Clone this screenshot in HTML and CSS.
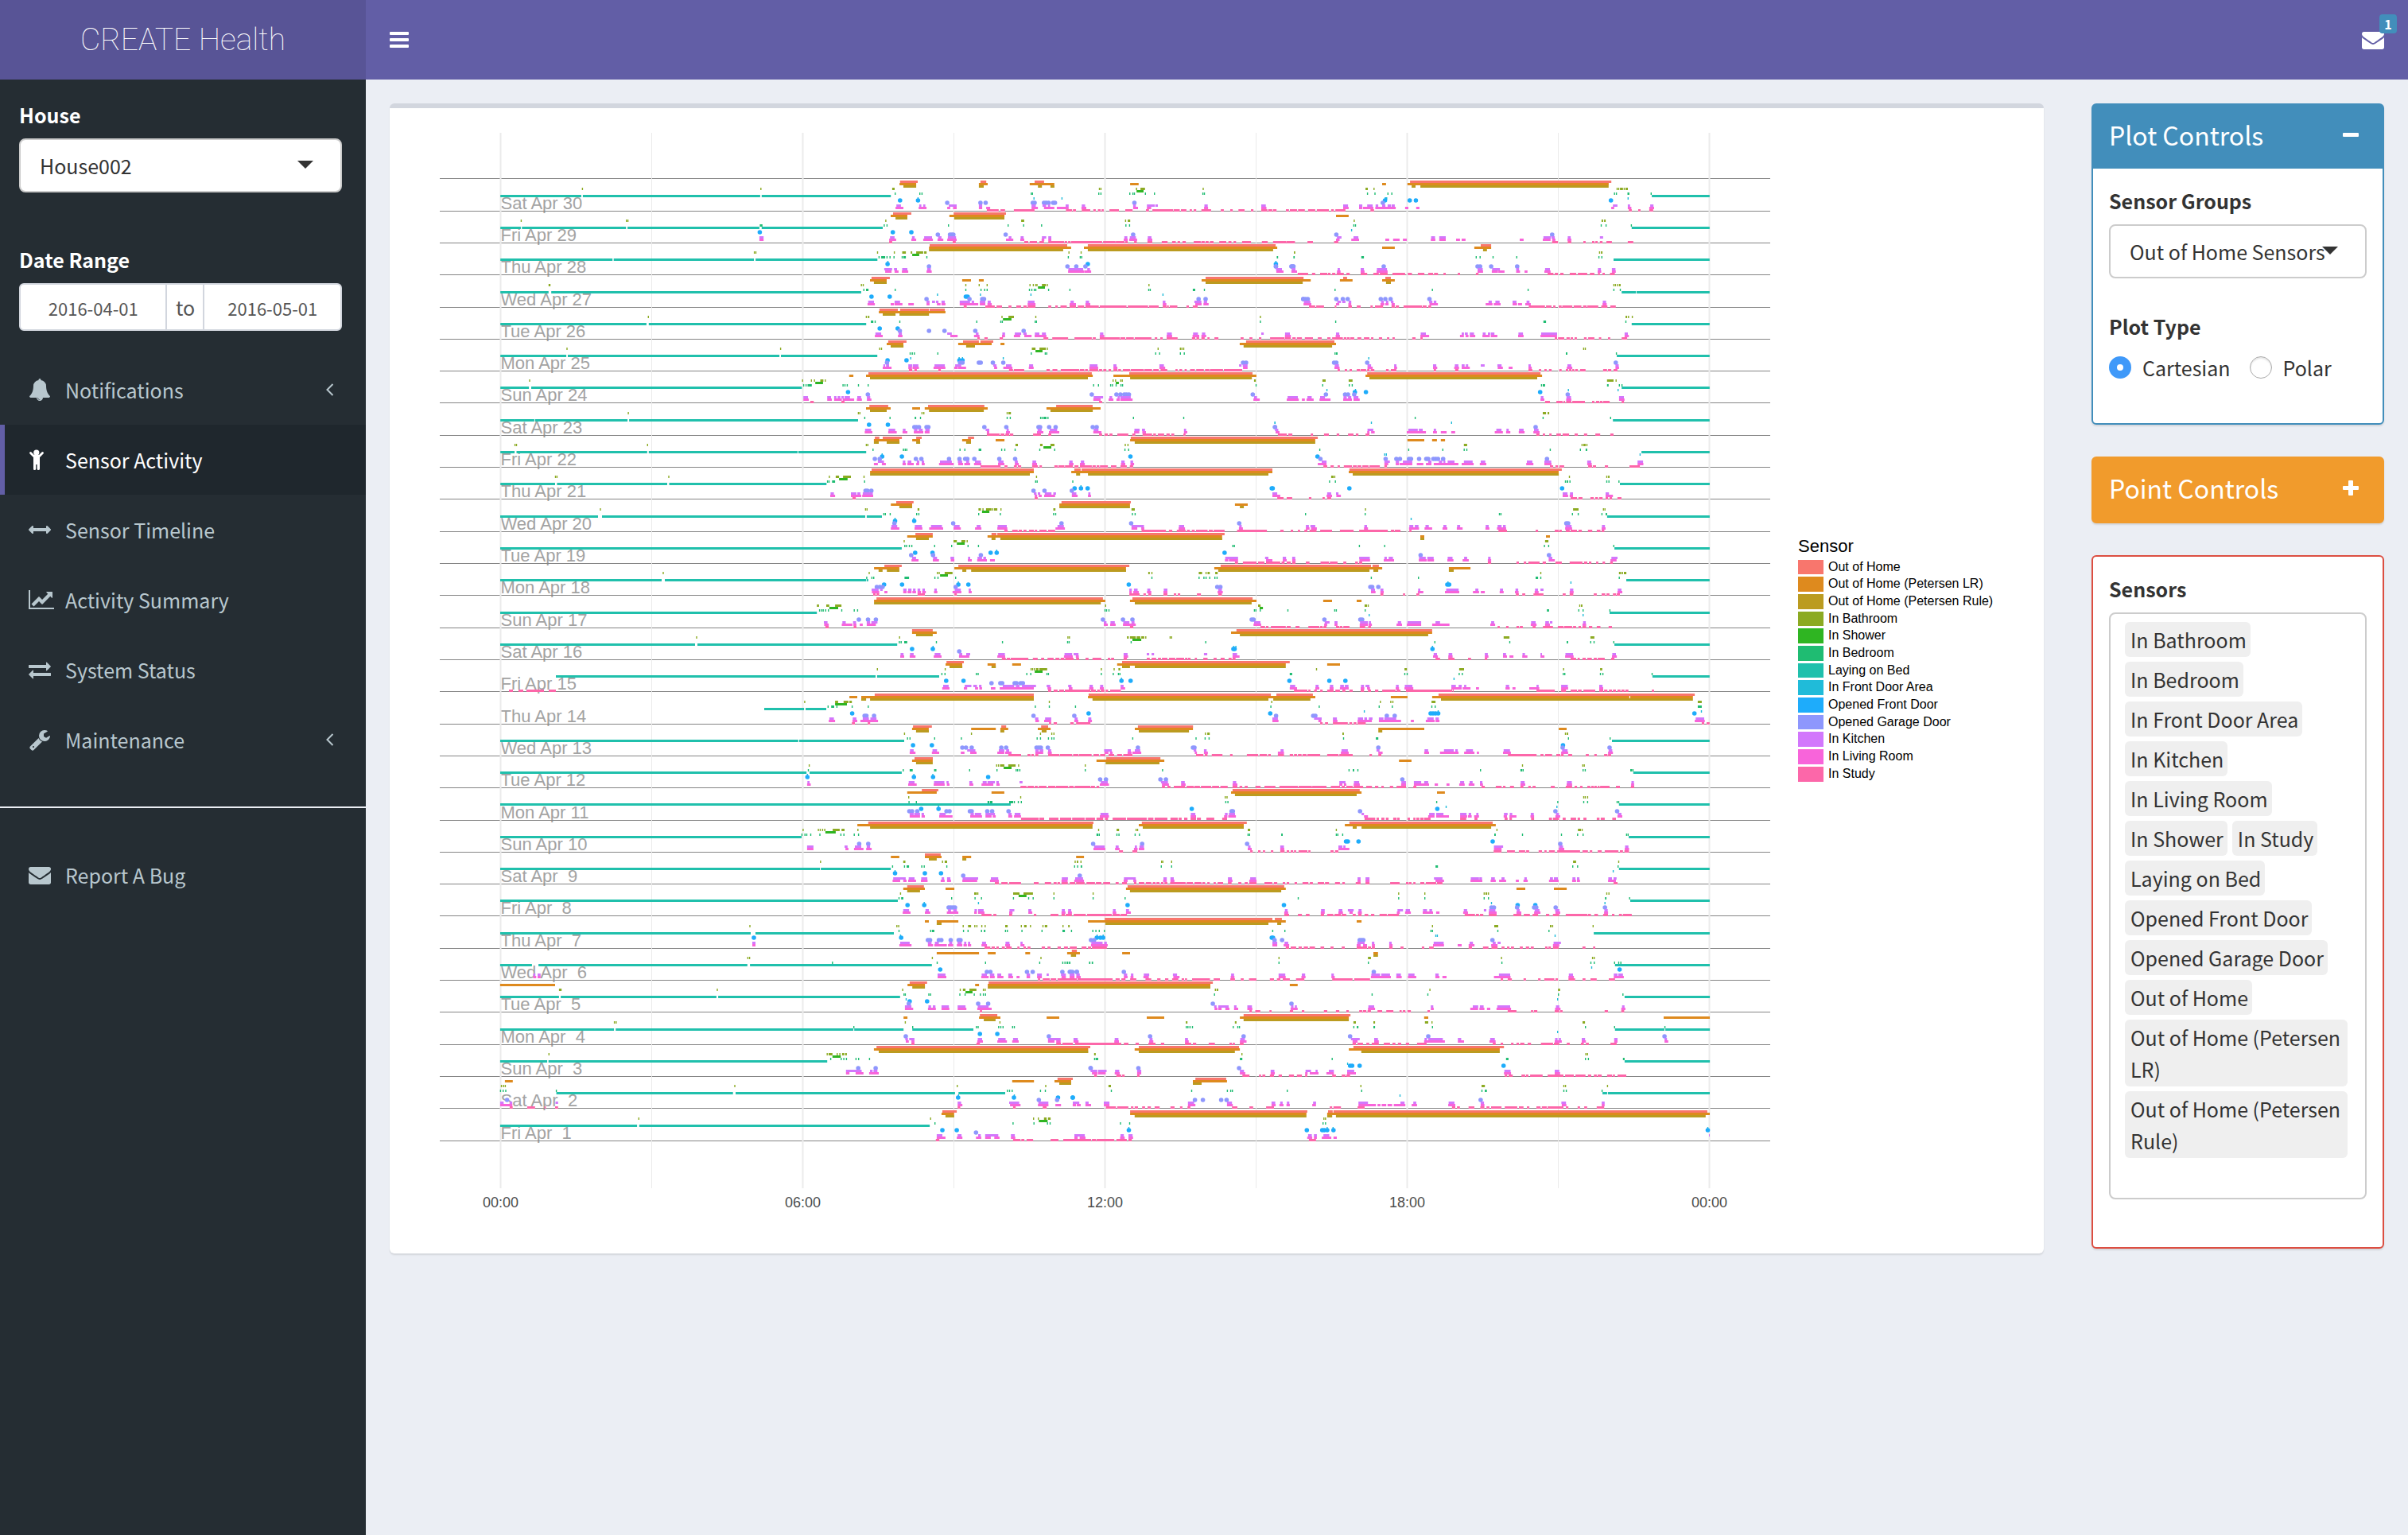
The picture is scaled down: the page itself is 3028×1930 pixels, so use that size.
FILE: index.html
```html
<!DOCTYPE html>
<html lang="en">
<head>
<meta charset="utf-8">
<title>CREATE Health</title>
<link rel="stylesheet" href="styles.css">
</head>
<body>
<header class="topbar">
  <a class="logo" href="#">CREATE Health</a>
  <nav class="navbar">
    <button class="icon-button" type="button" aria-label="Toggle navigation">
      <svg class="icon-bars" viewBox="0 0 24 20"><rect width="24" height="4" rx="1"/><rect y="8" width="24" height="4" rx="1"/><rect y="16" width="24" height="4" rx="1"/></svg>
    </button>
    <a class="messages" href="#" aria-label="Messages">
      <svg class="icon" viewBox="0 0 1792 1792"><use href="#envelope"/></svg>
      <span class="badge">1</span>
    </a>
  </nav>
</header>

<div class="shell">
  <aside class="sidebar">
    <div class="field">
      <label for="house">House</label>
      <div class="select"><select id="house"><option>House002</option></select></div>
    </div>
    <div class="field">
      <label for="date-from">Date Range</label>
      <div class="daterange">
        <input id="date-from" type="text" value="2016-04-01">
        <span class="to">to</span>
        <input type="text" aria-label="End date" value="2016-05-01">
      </div>
    </div>
    <nav class="menu">
      <a href="#"><svg class="icon" viewBox="0 0 1792 1792"><path d="M912 1696q0-16-16-16-59 0-101.5-42.5t-42.5-101.5q0-16-16-16t-16 16q0 73 51.5 124.5t124.5 51.5q16 0 16-16zm816-288q0 52-38 90t-90 38h-448q0 106-75 181t-181 75-181-75-75-181h-448q-52 0-90-38t-38-90q50-42 91-88t85-119.5 74.5-158.5 50-206 19.5-260q0-152 117-282.5t307-158.5q-8-19-8-39 0-40 28-68t68-28 68 28 28 68q0 20-8 39 190 28 307 158.5t117 282.5q0 139 19.5 260t50 206 74.5 158.5 85 119.5 91 88z"/></svg><span>Notifications</span><svg class="chevron" viewBox="0 0 10 16"><path d="M8.500 1L1.500 8l7 7"/></svg></a>
      <a class="active" href="#"><svg class="icon" viewBox="0 0 28 28"><circle cx="9.800" cy="5" r="3.600"/><path d="M1.500 4.500q1-1 2 0L7 8h6l3.500-3.500q1-1 2 0t0 2L14 11v14.500q0 1.500-1.700 1.500t-1.700-1.500V20H9.200v5.500q0 1.500-1.700 1.500T6 25.500V11L1.500 6.500q-1-1 0-2z"/></svg><span>Sensor Activity</span></a>
      <a href="#"><svg class="icon" viewBox="0 0 1792 1792"><path d="M1792 896q0 26-19 45l-256 256q-19 19-45 19t-45-19-19-45v-128h-1024v128q0 26-19 45t-45 19-45-19l-256-256q-19-19-19-45t19-45l256-256q19-19 45-19t45 19 19 45v128h1024v-128q0-26 19-45t45-19 45 19l256 256q19 19 19 45z"/></svg><span>Sensor Timeline</span></a>
      <a href="#"><svg class="icon wide" viewBox="0 0 2048 1792"><path d="M2048 1536v128h-2048v-1536h128v1408h1920zm-128-1248v435q0 21-19.500 29.500t-35.500-7.500l-121-121-633 633q-10 10-23 10t-23-10l-233-233-416 416-192-192 585-585q10-10 23-10t23 10l233 233 464-464-121-121q-16-16-7.500-35.500t29.500-19.500h435q14 0 23 9t9 23z"/></svg><span>Activity Summary</span></a>
      <a href="#"><svg class="icon" viewBox="0 0 1792 1792"><path d="M1792 1184v192q0 13-9.500 22.500t-22.500 9.500h-1376v192q0 13-9.500 22.500t-22.500 9.500q-12 0-24-10l-319-320q-9-9-9-22 0-14 9-23l320-320q9-9 23-9 13 0 22.500 9.500t9.500 22.500v192h1376q13 0 22.500 9.500t9.500 22.500zm0-544q0 14-9 23l-320 320q-9 9-23 9-13 0-22.500-9.500t-9.500-22.500v-192h-1376q-13 0-22.500-9.500t-9.500-22.500v-192q0-13 9.500-22.500t22.500-9.500h1376v-192q0-14 9-23t23-9q12 0 24 10l319 319q9 9 9 23z"/></svg><span>System Status</span></a>
      <a href="#"><svg class="icon" viewBox="0 0 1792 1792"><path d="M448 1472q0-26-19-45t-45-19-45 19-19 45 19 45 45 19 45-19 19-45zm644-420l-682 682q-37 37-90 37-52 0-91-37l-106-108q-38-36-38-90 0-53 38-91l681-681q39 98 114.500 173.500t173.500 114.500zm634-435q0 39-23 106-47 134-164.500 217.500t-258.500 83.500q-185 0-316.500-131.500t-131.500-316.500 131.500-316.500 316.500-131.500q58 0 121.500 16.500t107.500 46.500q16 11 16 28t-16 28l-293 169v224l193 107q5-3 79-48.500t135.500-81 70.500-35.500q15 0 23.500 10t8.500 25z"/></svg><span>Maintenance</span><svg class="chevron" viewBox="0 0 10 16"><path d="M8.500 1L1.500 8l7 7"/></svg></a>
    </nav>
    <hr class="divider">
    <nav class="menu">
      <a href="#"><svg class="icon" viewBox="0 0 1792 1792"><path id="envelope" d="M1792 710v794q0 66-47 113t-113 47h-1472q-66 0-113-47t-47-113v-794q44 49 101 87 362 246 497 345 57 42 92.500 65.500t94.500 48 110 24.500h2q51 0 110-24.500t94.500-48 92.500-65.500q170-123 498-345 57-39 100-87zm0-294q0 79-49 151t-122 123q-376 261-468 325-10 7-42.500 31t-54 38.500-52 32.500-57.500 27-50 9h-2q-23 0-50-9t-57.500-27-52-32.500-54-38.500-42.500-31q-91-64-262-182.500t-205-142.500q-62-42-117-115.500t-55-136.500q0-78 41.500-130t118.500-52h1472q65 0 112.500 47t47.500 113z"/></svg><span>Report A Bug</span></a>
    </nav>
  </aside>

  <main class="content">
    <section class="card plot-card">
      <svg class="plot" id="plot" viewBox="490 136 1771 1440" role="img" aria-label="Sensor activity by day"></svg>
      <div class="legend">
        <h2>Sensor</h2>
        <ul>
          <li><i class="out"></i>Out of Home</li>
          <li><i class="out-lr"></i>Out of Home (Petersen LR)</li>
          <li><i class="out-rule"></i>Out of Home (Petersen Rule)</li>
          <li><i class="bathroom"></i>In Bathroom</li>
          <li><i class="shower"></i>In Shower</li>
          <li><i class="bedroom"></i>In Bedroom</li>
          <li><i class="bed"></i>Laying on Bed</li>
          <li><i class="front-area"></i>In Front Door Area</li>
          <li><i class="front-door"></i>Opened Front Door</li>
          <li><i class="garage"></i>Opened Garage Door</li>
          <li><i class="kitchen"></i>In Kitchen</li>
          <li><i class="living"></i>In Living Room</li>
          <li><i class="study"></i>In Study</li>
        </ul>
      </div>
    </section>

    <div class="controls">
      <section class="box primary">
        <div class="box-header">
          <h3>Plot Controls</h3>
          <button class="icon-button" type="button" aria-label="Collapse"><svg class="icon-toggle" viewBox="0 0 20 20"><rect y="8" width="20" height="5" rx="1"/></svg></button>
        </div>
        <div class="box-body">
          <label for="groups">Sensor Groups</label>
          <div class="select"><select id="groups"><option>Out of Home Sensors</option></select></div>
          <fieldset>
            <legend>Plot Type</legend>
            <div class="radios">
              <label><input type="radio" name="type" checked>Cartesian</label>
              <label><input type="radio" name="type">Polar</label>
            </div>
          </fieldset>
        </div>
      </section>
      <section class="box warning">
        <div class="box-header">
          <h3>Point Controls</h3>
          <button class="icon-button" type="button" aria-label="Expand"><svg class="icon-toggle" viewBox="0 0 20 20"><rect y="8" width="20" height="5" rx="1"/><rect x="7" y="1" width="6" height="19" rx="1"/></svg></button>
        </div>
      </section>
      <section class="box danger">
        <h4>Sensors</h4>
        <ul class="tags">
          <li>In Bathroom</li><li>In Bedroom</li><li>In Front Door Area</li><li>In Kitchen</li><li>In Living Room</li><li>In Shower</li><li>In Study</li><li>Laying on Bed</li><li>Opened Front Door</li><li>Opened Garage Door</li><li>Out of Home</li><li>Out of Home (Petersen LR)</li><li>Out of Home (Petersen Rule)</li>
        </ul>
      </section>
    </div>
  </main>
</div>
<script src="plot.js"></script>
</body>
</html>
```
FILE: styles.css
```css
* { box-sizing: border-box; }
body {
  margin: 0;
  min-height: 100vh;
  display: flex;
  flex-direction: column;
  background: #ebeef4;
  color: #333;
  font: 25px/40px "Noto Sans CJK SC", "Noto Sans", sans-serif;
}
h2, h3, h4, ul, fieldset, legend { margin: 0; padding: 0; border: 0; font-weight: 400; }
ul { list-style: none; }
a { color: inherit; text-decoration: none; }
input, select, button { font: inherit; color: inherit; }
label, legend, h4 { font-weight: 700; }

.topbar { display: flex; height: 100px; color: #fff; }
.logo {
  width: 460px;
  background: #585496;
  text-align: center;
  font: 100 39px/100px Roboto, sans-serif;
}
.navbar {
  flex: 1;
  display: flex;
  align-items: center;
  justify-content: space-between;
  padding: 0 30px;
  background: #625ea6;
}
.icon-button { display: flex; padding: 0; border: 0; background: none; }
.icon-bars { width: 24px; height: 20px; fill: #fff; }
.icon { width: 28px; height: 28px; flex: none; fill: currentColor; }
.icon.wide { width: 32px; }
.messages { position: relative; display: flex; }
.badge {
  position: absolute;
  left: 22px;
  top: -18px;
  width: 22px;
  border-radius: 4px;
  background: #428ebb;
  font-size: 16px;
  font-weight: 700;
  line-height: 24px;
  text-align: center;
}

.shell { flex: 1; display: flex; }
.sidebar { width: 460px; background: #252d33; color: #b8c7ce; }
.field { padding: 24px 30px 0 24px; }
.field + .field { padding-top: 64px; }
.field > label { display: block; padding-bottom: 10px; color: #fff; }
.select { position: relative; color: #333; }
.select select {
  display: block;
  width: 100%;
  height: 68px;
  padding: 0 24px;
  border: 2px solid #ccc;
  border-radius: 8px;
  background: #fff;
  appearance: none;
}
.select::after {
  content: "";
  position: absolute;
  right: 36px;
  top: 28px;
  border: 10px solid transparent;
  border-top-color: #333;
  border-bottom: 0;
}
.daterange {
  display: flex;
  height: 60px;
  border: 2px solid #d2d6de;
  border-radius: 6px;
  background: #fff;
  color: #555;
  overflow: hidden;
}
.daterange input {
  flex: 183;
  min-width: 0;
  padding: 2px 0 0;
  border: 0;
  background: none;
  font-size: 22px;
  text-align: center;
}
.daterange input:last-child { flex: 171; }
.daterange .to {
  flex: 0 0 49px;
  border: solid #d2d6de;
  border-width: 0 2px;
  line-height: 56px;
  text-align: center;
}
.menu { margin-top: 30px; }
.menu a {
  display: flex;
  align-items: center;
  height: 88px;
  padding: 0 40px 0 30px;
  border-left: 6px solid transparent;
}
.menu span { flex: 1; margin-left: 18px; }
.menu .wide + span { margin-left: 14px; }
.menu .active { border-color: #625ea6; background: #1f272d; color: #fff; }
.chevron { width: 10px; height: 16px; fill: none; stroke: currentColor; stroke-width: 2; }
.divider { height: 2px; margin: 40px 0; border: 0; background: #ebeef4; }

.content {
  flex: 1;
  display: grid;
  grid-template-columns: minmax(0, 1fr) 368px;
  gap: 60px;
  align-items: start;
  padding: 30px;
}
.card, .box { border-radius: 6px; background: #fff; box-shadow: 0 2px 2px rgba(0, 0, 0, .1); }
.plot-card { display: flex; align-items: center; border-top: 6px solid #d2d6de; }
.plot { display: block; flex: 1771; min-width: 0; height: auto; font-family: "Liberation Sans", Arial, sans-serif; }
.legend { flex: 309; padding-bottom: 60px; color: #000; font-family: "Liberation Sans", Arial, sans-serif; }
.legend h2 { font-size: 22px; line-height: 34px; }
.legend ul { display: grid; grid-auto-rows: 1fr; gap: 3px; height: 279px; font-size: 16px; line-height: 18px; }
.legend li { display: flex; gap: 6px; }
.legend i { width: 32px; }

.out { fill: #f8766d; background: #f8766d; }
.out-lr { fill: #de8a1e; background: #de8a1e; }
.out-rule { fill: #bb9b20; background: #bb9b20; }
.bathroom { fill: #8caa22; background: #8caa22; }
.shower { fill: #2fb522; background: #2fb522; }
.bedroom { fill: #1fbc72; background: #1fbc72; }
.bed { fill: #20c0ac; background: #20c0ac; }
.front-area { fill: #20bbd9; background: #20bbd9; }
.front-door { fill: #1eacfb; background: #1eacfb; }
.garage { fill: #8e97fd; background: #8e97fd; }
.kitchen { fill: #d277fc; background: #d277fc; }
.living { fill: #f864da; background: #f864da; }
.study { fill: #fc67a9; background: #fc67a9; }
.major { stroke: #ebebeb; stroke-width: 2; }
.minor { stroke: #ebebeb; stroke-width: 1; }
.rule { stroke: #858585; stroke-width: 1; }
.day { fill: #a3a3a3; font-size: 22px; white-space: pre; }
.hour { fill: #4d4d4d; font-size: 18px; text-anchor: middle; }

.controls { display: flex; flex-direction: column; gap: 40px; }
.box { border: 2px solid; }
.primary { border-color: #428ebb; }
.primary .box-header { background: #428ebb; }
.warning { border-color: #f19b2c; background: #f19b2c; }
.danger { border-color: #dc4e41; padding: 20px 20px 60px; }
.box-header {
  display: flex;
  align-items: center;
  justify-content: space-between;
  height: 80px;
  padding: 0 30px 6px 20px;
  color: #fff;
}
.box-header h3 { font-size: 32px; }
.icon-toggle { width: 20px; height: 20px; fill: #fff; }
.box-body { padding: 20px 20px 50px; }
.box-body > label { display: block; padding-bottom: 10px; }
.box-body .select { margin-bottom: 40px; }
.radios { display: flex; gap: 24px; padding-top: 12px; }
.radios label { display: flex; align-items: center; gap: 14px; font-weight: 400; }
.radios input {
  width: 28px;
  height: 28px;
  margin: 0;
  border: 1px solid #aaa;
  border-radius: 50%;
  background: #fff;
  box-shadow: inset 0 2px 2px rgba(0, 0, 0, .1);
  appearance: none;
}
.radios input:checked { border: 10px solid #3f99f9; box-shadow: none; }
.tags {
  display: flex;
  flex-wrap: wrap;
  gap: 6px;
  margin-top: 10px;
  padding: 10px 18px 50px;
  border: 2px solid #ccc;
  border-radius: 8px;
}
.tags li { max-width: 280px; padding: 2px 5px 2px 7px; border-radius: 6px; background: #efefef; }
```
FILE: plot.js
```js
// Each day is a list of runs. An upper-case letter picks a time base (start, step),
// a lower-case letter picks the sensor, then come spans "from-to" or single events.
const bases = {
  P: [0, 1], L: [540, 0.4847], M: [1040, 0.38265], R: [1600, 0.40816],
  N: [1000, 0.38265], S: [1600, 0.38265], B: [540, 0.5485], T: [1340, 0.52296]
};
const sensors = ['out', 'out-lr', 'out-rule', 'bathroom', 'shower', 'bedroom', 'bed',
  'front-area', 'front-door', 'garage', 'kitchen', 'living', 'study'];

const days = [
['Sat Apr 30', 'L g184-394 398-858 862-1197 d397 860 M a240-298 504-523 682-713 b238-293 499-528 666-747 996-1024 c251-293 499-515 693-706 734-747 d214-222 895 900 1015-1019 1030-1045 1236 e1017-1040 f224 305 312 671 675 893 900 995 1005 1010 1046 1076 1235 1240 h299 680 772 i240 299 j395 504 521 676 682 713 720 728 743 749 1010 k228-243 303-310 316-323 400-426 499-510 672-686 708-720 726-733 784-794 837-848 1006-1015 1051-1077 1079-1087 1240-1251 1427-1442 l225-251 301-327 395-405 414-426 499-510 523-536 672-693 713-747 755-794 836-852 1006-1022 1051-1065 1239-1252 1427-1444 m525-564 570-585 614-682 785-805 808-818 837-865 875-883 890-899 902-909 928-959 980-1004 1048-1058 1069-1137 1139-1159 1163-1181 1192-1199 1205-1213 1230-1262 1294-1304 1325-1333 1352-1372 1393-1401 1427-1447 1450-1463 1466-1477 1508-1516 1521-1544 1548-1568 R a424-1044 b338-350 416-1036 c429-441 456-1036 d287-294 313 1062 1067 1071-1080 1084 1088-1095 f293 316 356 368 1054 1060 1094-1100 1167 h346-354 1096 i347 423 442 1043 j340 k218-233 267-277 292-309 318-326 338-348 355-365 367-377 1049-1063 1095-1102 1164-1174 l218-235 267-277 279-311 317-380 409-419 443-453 1044-1053 1095-1106 1161-1176 m2-12 42-51 54-76 83-100 110-132 137-174 181-189 194-225 302-313 1098-1107 1127-1134 1161-1173 g1169-1347'],
['Fri Apr 29', 'L g184-237 240-510 514-856 862-1176 d238 511 515 f857-864 i857 k856-867 l856-867 M a217-277 416-588 b209-264 402-583 c225-264 418-583 d193 638-648 981 988-996 f188 197 399 595 646 705 982 994 i216 277 j364 404 410 415 587 1006 k207-222 279-288 319-345 365-376 397-424 597-606 636-646 706-720 727-737 977-987 995-1015 1054-1066 l204-227 277-293 316-348 363-382 395-426 588-612 635-648 705-714 727-737 975-988 993-1019 1053-1069 m204-214 413-423 648-661 666-690 698-713 727-779 781-789 792-800 802-904 907-948 949-978 980-988 1009-1018 1053-1069 1100-1119 1134-1146 1152-1160 1168-1179 1205-1228 1230-1241 1244-1254 1258-1270 1289-1312 1319-1329 1336-1344 1364-1378 1374-1393 1429-1448 1466-1476 1481-1505 1509-1519 1523-1537 R b196-235 d252 1014-1019 1022-1027 f251 256 1013 1028 1106 h244 j197 862 k199-213 250-265 489-501 514-534 835-858 860-870 910-919 1009-1019 l196-207 243-267 348-360 372-392 402-414 488-502 514-534 566-578 583-595 762-774 833-857 862-872 909-921 m2-20 27-42 47-69 108-125 190-203 862-880 910-921 958-965 985-992 995-1002 1009-1017 1029-1046 1095-1112 g1107-1347'],
['Thu Apr 28', 'L g184-475 478-842 846-1162 d843 847 M a337-789 857-1474 b335-802 844-1479 c335-776 857-1466 d166 221 247-259 275-280 293-316 319-327 795 835 1536 e280-303 f171 178-191 197 207 220 247 251-259 328 793 832 837 1480 1535 h200 1475 i199 857 1475 j335 790 819 849 1475 1526 1532 k188-214 220-230 247-264 329-341 793-842 855-864 1479-1495 1527-1538 l191-212 222-235 246-267 327-344 792-844 845-868 1477-1500 1526-1544 m1547-1568 R b0-15 338-377 622-674 a0-10 642-674 c649-661 d68 1008 1012-1017 f16 67 274-282 628 640 680 753 1006 1015 j11 60 65 343 632 640 674 754 k11-29 60-71 201-208 272-282 322-353 632-648 677-701 751-760 840-855 1003-1012 1046-1057 l12-34 59-76 199-210 272-284 321-355 632-649 676-695 696-715 751-763 777-786 838-857 1002-1013 1046-1058 m78-110 122-132 147-169 171-179 184-194 198-220 228-238 272-292 311-328 331-355 370-409 417-430 448-468 480-495 498-510 527-534 571-578 627-635 848-866 870-880 887-897 916-936 941-970 978-992 1003-1009 1017-1024 1040-1055 g1051-1347'],
['Wed Apr 27', 'L g184-309 316-1120 d309-314 M a146-206 1244-1565 b141-196 444-473 499-515 1231-1568 c154-196 1244-1563 d113 119 456 500 526 667 678 686 690 706-719 724 1058 e693-716 f121 128-136 224 456 506 518 526 665 673 681 686 728 798 1057 1062 1202-1210 1240 h363 504 670 1104 i146 206 456 462 j327 468 510 516 1221 1244 1565 k135-154 222-240 327-337 345-355 358-366 376-387 436-470 475-483 502-520 528-538 660-682 800-811 850-861 1103-1112 1207-1230 1238-1249 l133-157 209-220 222-248 267-285 327-337 361-373 376-389 436-497 502-520 527-541 659-685 797-818 849-865 1103-1115 1210-1231 1237-1254 m449-459 520-551 557-575 596-606 622-638 645-656 659-685 727-737 750-758 767-788 797-818 824-845 849-893 896-984 988-1055 1058-1090 1103-1115 1117-1123 1126-1151 1181-1189 1202-1218 R a0-96 218-230 348-365 b0-118 208-247 338-377 c0-93 350-365 d1052 1057 1064 1068-1073 f193 493 788 1052 1072 j95 102 109 197 217 232 334 348 364 484 k97-117 200-211 215-225 235-243 335-343 350-357 365-373 483-493 497-505 666-676 687-700 740-752 783-792 1018-1028 l96-120 196-206 234-243 333-345 348-358 367-377 484-510 657-678 682-703 740-754 757-769 779-796 1017-1030 m113-132 135-159 192-197 234-245 260-272 302-309 316-341 367-377 380-390 404-461 463-475 480-489 790-840 843-860 865-872 882-891 893-924 928-952 957-968 970-1004 1013-1032 1041-1058 g1076-1120 1122-1347'],
['Tue Apr 26', 'L g184-563 569-1133 d568 M a172-233 240-335 337-387 b170-389 c183-225 238-335 d129 134-139 575 596-614 686 1424 e578-606 f144-152 158 239 492 571 576 684 688 1424 i173 232 j239 335 386 487 646 k159-178 235-246 395-410 489-498 576-585 617-638 645-656 683-698 706-719 897-908 1117-1133 1203-1219 1232-1243 1427-1435 1506-1521 l157-183 233-248 405-429 483-501 575-585 614-635 648-672 682-721 896-911 1116-1134 1201-1223 1230-1246 1505-1524 m494-502 517-528 567-578 711-727 740-792 813-870 873-883 896-962 964-980 983-1008 1011-1066 1077-1085 1095-1103 1116-1152 1199-1210 1214-1223 1230-1241 1250-1257 1273-1286 1359-1369 1388-1398 1419-1427 1456-1503 1505-1524 1529-1540 1544-1560 R d1088-1093 1097 1109 f195 835-843 1089 k39-53 196-206 457-473 583-590 593-602 608-621 648-657 664-671 673-684 758-772 828-877 1085-1095 l39-56 195-208 456-483 578-590 595-604 608-625 647-670 673-693 757-774 826-877 1085-1098 m0-37 39-56 64-71 76-91 100-125 140-152 169-179 184-217 220-228 230-238 240-252 262-274 282-299 304-311 328-338 353-360 370-377 431-441 456-463 870-877 880-899 906-916 919-926 931-938 960-968 973-992 1006-1013 1034-1041 1076-1093 g1107-1347'],
['Mon Apr 25', 'L g184-355 359-908 912-1162 d357 911 M a201-261 447-499 504-546 1377-1568 b196-251 431-541 570-583 1356-1568 c209-251 457-486 1369-1568 d173 179 673-685 698-719 724 1088 1161 1166 1172 e685-708 f273 278-282 287 364 671 717 722 1080 1093 1161 1174 h275 434 445 579 i199 261 435 445 j197 437 445 499 505 545 579 1367 1377 k185-191 194-204 267-280 282-300 353-387 421-441 546-557 588-606 664-677 863-889 941-951 1092-1107 1354-1362 1366-1382 l183-212 267-279 281-302 350-389 418-430 431-457 549-559 579-609 663-679 862-891 941-954 1092-1111 1367-1382 m269-280 287-295 366-374 598-611 614-648 721-732 741-757 768-829 831-845 848-857 862-891 894-904 908-918 925-933 941-954 957-966 972-996 998-1041 1043-1068 1072-1090 1096-1118 1145-1152 1158-1167 1175-1182 1193-1209 1213-1238 1242-1256 1258-1301 1304-1364 R a0-191 b0-196 c0-184 d959 964 f193 196-201 904-909 1060 h297 j190 197 292 1058 k192-205 293-304 375-382 495-505 562-573 583-592 596-603 642-654 693-706 789-796 909-921 1057-1067 l191-207 293-309 375-384 495-508 560-575 583-608 694-710 728-740 789-799 907-924 1057-1068 m201-208 223-230 238-245 260-270 272-289 292-299 303-314 350-358 365-382 497-504 563-573 789-801 821-828 838-845 852-860 884-891 904-911 914-921 924-930 933-941 948-965 1019-1031 1034-1044 1051-1063 g1061-1347'],
['Sun Apr 24', 'L g184-258 264-966 d260 968 991 999 1014-1022 1027 b1089-1100 e1001-1021 f971 977 981-992 1073 1078 1084 1113 i1086 k970-982 1032-1042 1050-1056 1059-1066 1069-1075 1077-1091 1110-1120 l970-984 1032-1044 1050-1070 1072-1102 1109-1122 m988-997 1069-1077 M a136-870 993-1398 b128-873 941-1411 c141-857 996-1396 d940 948 965 970 1403-1409 e949-959 f135 876 892 932 938 950 966 971 1410 j134 870 951 964 977 984 992 1399 k131-142 876-907 928-937 955-962 964-998 1403-1413 1515-1547 l131-146 875-899 925-941 951-962 964-1004 1401-1422 1511-1550 m894-904 R a292-826 b287-831 c299-816 d154-164 235-247 1031-1051 1059 f155 237 246 829 833-840 1031-1036 1069 1077 h168 256 912 1065 i254 288 825 j165 224 233 252 910 k47-78 108-121 147-162 219-229 233-243 250-265 827-835 906-920 1068-1083 l44-81 91-100 105-127 145-179 218-245 250-269 826-838 905-921 1068-1085 m840-855 875-894 897-902 905-921 924-963 985-992 997-1007 1009-1017 1019-1039 1076-1083 g1076-1347'],
['Sat Apr 23', 'L g184-272 274-514 518-1112 d516 M a139-201 332-517 753-873 b128-209 280-306 321-528 721-899 c141-196 335-515 734-873 d103 108 312 318 592 596-604 f124 207 288-293 307 592 602 702 707 711-721 726 1007 1172 h1472 i138 200 j287 294 302 327 333 517 589 695 700 730 751 873 886 1472 k125-145 202-224 249-258 286-297 301-314 323-337 521-533 590-597 692-705 732-756 876-892 1010-1027 1035-1045 1173-1180 1473-1482 l124-149 201-229 248-264 285-316 321-337 525-533 588-601 690-711 729-763 875-902 1009-1026 1036-1048 1173-1184 1474-1487 m525-567 570-583 586-599 601-612 677-703 727-737 894-904 912-923 928-938 954-990 1003-1013 1037-1068 1072-1081 1087-1108 1115-1126 1131-1141 1171-1178 1482-1511 1516-1529 R d833-843 848-853 f440 834 1042 h8 305 552 j8 811 k8-18 293-311 419-448 451-463 497-504 690-706 721-728 760-774 806-820 l10-21 292-299 304-315 414-473 495-507 519-537 551-563 685-710 720-733 759-777 804-823 m17-44 49-61 118-125 159-174 198-206 233-250 257-265 287-299 813-823 833-840 853-860 875-889 894-914 931-941 960-970 995-1010 1041-1051 g1049-1347'],
['Fri Apr 22', 'L g184-221 226-565 569-955 957-1133 d222 226 566 M a157-172 183-246 293-311 463-483 998-1568 b154-238 280-306 444-473 554-583 996-1568 c154-170 196-238 293-306 457-473 1011-1568 d129 134 619-627 700-708 734-747 980 989 e711-737 f151 249-253 257 262 437 453 498-507 574 584 618 699 748 979 991 h181 i181 246 997 j157 173 292 310 401 435 454 461 484 566 618 k167-187 249-257 265-277 295-303 311-319 371-410 430-444 457-467 486-505 563-580 617-627 675-687 796-807 834-845 967-978 997-1006 l154-167 180-193 248-259 264-285 293-303 311-321 368-416 431-447 451-470 483-507 562-583 617-630 674-690 795-810 831-847 966-980 997-1009 m504-570 583-593 614-624 627-638 674-693 698-706 747-758 760-780 782-808 813-826 831-870 872-883 886-895 897-923 933-951 964-985 995-1006 R a0-140 b0-132 416-468 492-507 519-532 c0-132 d590-600 954 958-965 969 f146 420 525 591 599 856 949 965-970 h346 351 1133 i139 j148 349 382 393 421 427 452 474 480 496 503 510 526 846 k152-167 345-362 380-390 402-431 480-490 513-523 527-533 540-561 590-617 642-656 784-801 838-859 970-982 1125-1142 l140-167 345-357 380-390 392-431 445-465 473-490 497-573 583-620 639-659 782-804 838-860 970-984 1125-1143 m157-169 179-189 201-208 220-245 248-260 262-274 277-296 299-331 345-353 855-865 872-880 884-899 973-985 987-997 1024-1034 1100-1132 g1137-1347'],
['Thu Apr 21', 'L g184-326 331-617 622-1030 d327 331 621 N a251-784 917-938 941-1568 b246-784 907-1568 c246-771 923-936 962-1555 d112 133-144 157-183 226 793 e144-172 f106 111 121-131 228 790 795 912 h939 i918 939 961 1566 j783 819 909 231 237 250 k116-127 183-201 204-214 222-255 784-793 797-805 820-842 848-857 909-924 963-970 l115-131 183-217 220-256 787-795 800-810 818-854 909-928 962-972 m188-199 787-797 S a253-951 b251-941 c264-941 d193-201 205 976 1099 1103-1108 f188 207 963 967-972 978 1099 1106 1139 i1 253 952 k0-16 180-193 209-217 954-970 978-988 1095-1106 l0-26 178-196 210-225 954-972 977-988 1095-1119 m16-37 47-65 120-128 165-172 180-193 980-1001 1006-1019 1045-1056 1061-1070 1074-1085 1095-1103 1108-1116 1134-1147 g1142-1437'],
['Wed Apr 20', 'P g629-752 757-1000 d755 N g0-230 235-285 a332-389 875-1103 b314-384 868-1100 1445-1487 c342-384 868-1100 1461-1474 d231 236 402-408 602-610 617 627-645 649 653-664 676 848-855 1105-1116 e614-638 f291 296 312 399 406 603 674 849 856 1108 1117 i328 391 h328 390 j326 519 875 1104 1459 k316-335 393-416 446-482 521-540 596-609 665-695 862-883 1105-1146 1261-1278 1459-1467 l314-342 392-418 440-486 520-544 591-612 664-697 855-886 1105-1124 1137-1147 1260-1281 1458-1471 m687-698 713-731 734-745 750-760 768-784 787-795 802-826 831-854 1138-1218 1228-1239 1254-1283 1287-1297 1303-1313 1317-1355 1359-1372 1375-1411 1452-1550 S d306 988-1006 1088 1093 f109 305 746 751 986 1005 1083 1095-1100 h456 j966 972 k110-120 125-141 302-311 450-463 468-480 503-514 562-572 607-617 701-711 740-753 758-767 963-983 1083-1093 l110-122 127-146 301-314 449-482 500-525 559-575 606-625 700-713 738-768 962-985 1082-1095 m26-37 60-68 84-91 105-115 122-145 157-196 222-267 285-379 389-400 402-421 450-457 743-771 865-873 928-941 943-951 964-977 980-1001 1006-1017 1037-1051 1066-1078 1082-1091 g1100-1437'],
['Tue Apr 19', 'P g629-1000 N g0-350 a395-452 645-661 664-1411 b368-452 632-1403 c397-439 645-658 674-1403 d358 520-531 546-559 565 e531-557 f360 366 375 383 458 514 568 602 1438 1443 h662 i394 451 642 662 1411 j381 453 610 k384-397 453-466 510-522 568-575 599-614 618-627 1413-1455 1544-1555 l382-405 452-472 511-523 567-580 598-630 640-656 1412-1423 1425-1455 1547-1568 m1445-1455 1471-1516 1521-1542 1547-1568 S b486-499 899-912 c486-499 d896-907 f286 369 894 908 1122 j487 909 k34-45 65-75 285-320 368-376 382-396 482-504 509-530 576-592 630-640 709-717 908-920 1114-1134 l34-47 65-76 286-321 366-400 481-507 509-531 575-595 625-645 708-719 908-928 1111-1131 m0-26 30-40 47-60 65-76 110-122 158-186 189-214 233-243 272-281 285-295 708-719 802-810 826-834 841-878 888-899 930-951 977-1019 1024-1035 1040-1048 1064-1071 1085-1093 1110-1119 g1124-1437'],
['Mon Apr 18', 'P g629-832 836-1000 d834 N g0-233 235-240 a293-350 536-1098 1398-1568 b259-342 523-1087 1377-1568 c274-287 301-342 549-562 578-1087 1390-1568 d243 467 473 491-517 1160-1165 1172 1326-1337 1350 1355-1362 1380-1388 e476-502 f235 252 258 359-374 459 469 527 1172 1327 1343 1350 1362 1379 1386 h536 i292 351 536 569 1096 j268 278 287 527 1387 1397 k251-274 279-287 355-366 371-382 387-395 402-411 418-426 457-465 524-544 570-577 1098-1106 1113-1125 1157-1167 1211-1223 1390-1402 l252-276 293-303 355-366 369-382 385-397 402-413 417-429 456-467 517-546 570-580 1098-1106 1111-1129 1156-1170 1210-1223 1388-1405 m256-264 267-276 402-426 523-531 1098-1132 1144-1152 1160-1170 1210-1223 1244-1252 1257-1265 1320-1333 1390-1402 S a0-324 329-350 b0-361 580-651 c0-319 332-348 580-596 d882 1139-1145 1147-1152 1155-1163 f325 480 865-873 882 1140 h577 981 i575 581 j322 328 348 k324-337 355-365 479-486 571-612 667-677 748-758 799-808 863-873 881-891 978-989 1135-1147 l324-339 355-366 478-496 567-614 659-679 685-698 747-760 797-809 862-875 977-990 1134-1150 m355-365 429-436 473-483 800-810 821-831 858-891 954-964 977-989 1056-1066 1082-1094 1098-1108 1119-1129 1131-1142 g1163-1437'],
['Sun Apr 17', 'P g629-1000 N g0-71 a267-1011 1108-1503 b259-1019 1100-1516 c259-1004 1116-1500 d71-78 102-112 131-152 1020 1521-1529 e112-141 1526-1537 f80 87 92 100 109 153 194 205 1018 1023 1031 1509 1514 1528 j209 239 265 1011 1077 1108 1500 1506 k94-106 155-166 190-200 235-246 250-270 1014-1023 1036-1050 1078-1098 1105-1115 1508-1529 l95-110 153-188 191-201 212-222 235-265 1014-1027 1035-1053 1077-1119 1506-1531 m99-110 192-201 1100-1111 1529-1544 1547-1555 1563-1568 S b167-196 277-293 d303-311 315 1010 1014-1019 f51 205 210 305 902-909 1007 1021 1109 h318 1021 j171 289 295 k172-188 204-214 288-314 317-324 412-423 444-489 536-551 719-729 850-865 897-909 912-920 1021-1030 l170-180 204-214 287-314 316-327 408-426 442-489 525-582 716-732 849-868 896-912 1019-1031 m0-44 47-60 76-89 118-154 157-165 168-178 209-220 222-230 233-253 287-305 315-324 740-747 768-776 802-810 813-823 855-865 889-922 938-957 959-985 988-998 1006-1014 1019-1031 1040-1051 1066-1078 1105-1116 g1108-1437'],
['Sat Apr 16', 'P g629-874 877-1000 d876 N g0-335 a384-452 1450-1568 b384-465 1432-1568 c397-452 1461-1568 d343 896 901 1090-1096 1100-1119 1122-1134 1137-1147 1152 1232 1237 e1108-1137 f342 348 358-368 464 681 895 900 1104 1349 h453 1441 1448 i384 452 1440 1444 j539 k346-356 377-389 458-477 539-549 562-575 667-689 885-910 915-931 1079-1092 1155-1163 1171-1179 1343-1354 1437-1452 l345-358 376-395 455-481 538-572 664-690 883-912 922-932 1079-1094 1437-1460 m679-692 695-706 708-766 781-797 808-818 829-849 855-868 872-884 887-915 923-933 954-964 977-1006 1027-1035 1038-1048 1079-1090 1155-1165 1171-1186 1192-1202 1205-1223 1228-1249 1252-1278 1281-1289 1291-1299 1313-1320 1341-1355 1375-1385 1398-1411 1424-1434 1437-1447 S a0-525 b0-525 c0-512 d760-779 1045-1058 f534 780 967-972 1046 1057 1122 h526 i526 k530-541 579-591 698-708 758-768 822-830 881-886 963-988 1117-1129 l528-544 578-592 698-710 758-771 779-792 821-838 881-894 962-990 1116-1132 m536-551 578-598 643-653 698-706 980-998 1003-1010 1019-1030 1035-1050 1056-1066 1069-1092 1113-1124 g1124-1437'],
['Fri Apr 15', 'P g699-1000 m640-645 652-658 662-684 690-699 N g0-264 269-473 a497-554 1074-1568 b494-549 632-659 713-742 1058-1568 c507-549 645-659 1074-1100 1116-1568 d270 493 775 780 786 791-799 802-828 1006 1048 1062-1068 e787-813 f482 492 595 601 761 774 827 832 1006 1045 1062 1067 h1072 i496 553 1072 1102 j645 674 680 721 727 741 748 k486-504 557-579 585-597 604-612 682-719 725-737 745-791 826-838 897-908 967-978 1002-1012 1069-1079 l483-507 554-565 591-601 605-614 643-658 672-784 829-841 899-911 966-980 1001-1014 1069-1084 m831-841 849-862 867-883 886-970 972-988 992-1001 1004-1016 1020-1028 1035-1070 S a0-57 b0-44 180-222 c0-44 d145 434-442 614-630 957 1077-1084 f57-65 435 443 614 624 956 961 1078 1086 1248 h597 i56 187 240 k58-75 142-152 189-200 223-235 238-250 291-301 306-319 406-415 435-460 588-603 612-622 630-637 767-778 868-875 949-971 1074-1085 l57-81 141-154 188-201 222-251 290-302 311-321 405-416 434-463 588-622 625-651 669-679 766-780 789-799 844-877 949-972 1074-1087 m71-115 118-125 137-146 157-165 180-201 207-222 230-240 253-264 290-301 314-324 337-348 361-405 408-421 439-591 593-596 868-928 949-965 980-1001 1004-1016 1022-1061 1074-1087 1090-1101 1106-1116 1119-1129 1134-1144 1147-1157 1160-1170 1247-1254 g1249-1437'],
['Thu Apr 14', 'P g961-1000 N g0-29 34-102 a261-784 964-1563 b178-204 217-784 962-1568 c217-233 246-784 977-1555 d31 131-141 159-175 178-186 835 1566 e131-170 f108 118-128 137 187 240 789 835 921 1563 i187 964 1561 j228 234 259 783 917 k112-127 189-201 222-242 247-267 788-799 821-841 918-928 963-973 l110-131 188-204 214-272 789-801 818-841 917-930 962-975 m186-196 238-246 834-841 849-860 904-915 923-970 S a13-133 546-1388 b0-141 389-444 525-1173 1176-1382 c3-125 554-1382 d355 389 396 523-536 1398-1411 f154 351 394 524 535 1398-1411 h302 545 1410 i520 528 536 545 1387 j12 134 141 376 402 k0-18 137-162 199-212 281-298 302-311 317-329 350-365 368-407 509-530 536-547 1391-1419 l0-20 151-161 199-214 280-327 350-423 455-465 504-533 536-549 1388-1421 m157-165 173-183 199-248 253-262 267-276 280-307 1411-1419 1427-1437'],
['Wed Apr 13', 'P g629-1000 N g0-10 13-358 a387-449 677-693 808-831 1126-1307 b384-439 578-659 674-700 797-839 1116-1307 c397-439 674-687 810-826 1129-1294 d359 579 806 843 850 1348 1354-1362 f369 377 458 546 795 806 832 843 850 1109 1317 1347 1360 i387 449 j549 561 580 677 693 793 800 807 830 1126 1307 1312 k377-389 451-466 565-592 669-687 693-703 789-800 803-815 831-841 1015-1040 1093-1103 1116-1134 1309-1318 1343-1352 l376-395 449-473 544-556 575-596 664-687 690-711 789-815 830-843 1016-1029 1034-1043 1092-1105 1108-1137 1313-1320 1343-1356 m700-742 763-773 776-784 789-799 831-868 870-910 913-931 933-974 980-998 1002-1019 1030-1048 1058-1074 1078-1108 1317-1341 1346-1355 1369-1404 1429-1437 1484-1521 1526-1550 1554-1563 S b348-499 941-967 c348-361 d230-235 963 967-972 f234 340-348 973 1110 i955 j348 954 1108 k27-37 227-248 342-352 500-512 564-596 601-609 636-659 760-781 952-970 1105-1117 l18-38 225-251 348-362 499-515 551-612 630-664 672-679 758-784 949-972 1103-1119 m18-38 57-68 71-81 84-96 99-112 115-157 180-217 220-264 319-327 348-358 774-868 881-891 896-919 933-946 949-957 972-985 1030-1040 1058-1066 1090-1101 1103-1113 g1116-1437'],
['Tue Apr 12', 'P g629-1000 N g0-37 47-350 a392-452 1022-1200 b384-452 990-1213 c397-452 1020-1197 d46 662 668 673-687 700-724 734 953 e685-711 f43 355 376-386 458 462 573 663 726 731 738 953 1207 h40 390 452 i40 390 453 634 j1002 1021 1200 1218 k40-47 373-392 456-490 497-504 572-582 616-629 632-656 661-669 737-747 1004-1027 1202-1225 1268-1280 1438-1449 l39-51 371-399 455-491 498-507 572-585 612-651 661-672 1001-1031 1205-1228 1268-1283 1437-1453 m740-760 763-784 787-797 800-826 831-855 857-897 900-915 918-970 972-985 990-999 1205-1215 1223-1233 1244-1281 1286-1310 1312-1330 1333-1367 1370-1393 1397-1421 1437-1453 1460-1469 1477-1487 1512-1529 1542-1568 S b416-457 d822 1020 1025 f252 264-269 281 684 815-821 824 1021 1028 1176-1182 1185 j427 k220-240 268-285 424-439 465-489 499-512 617-630 648-658 682-690 816-829 968-984 1180-1188 l220-230 235-243 267-287 423-439 465-515 533-544 572-582 614-632 645-664 682-692 815-831 967-985 1179-1189 m0-10 23-84 86-130 131-178 192-222 228-238 243-264 267-298 308-327 337-348 358-366 386-397 408-439 463-473 687-698 734-753 758-766 781-794 815-825 841-849 855-865 915-928 964-985 993-1001 1011-1019 1035-1045 1048-1056 1058-1066 1069-1075 1077-1108 1129-1142 1178-1189 g1186-1437'],
['Mon Apr 11', 'P g629-1000 N g0-708 a416-470 1437-1568 b368-465 645-687 1432-1568 c1445-1568 d373 741 1413 1419 f374 398 632-638 640-648 703-716 720 733 743 1415 1422 h471 i414 471 1303 j375 384 401 497 507 574 580 631 647 701 1434 1438 k376-389 391-410 415-423 474-494 576-587 590-611 625-656 700-711 721-740 1003-1029 1300-1315 1412-1421 1425-1445 l376-410 415-426 473-517 575-614 625-645 649-659 700-713 719-742 1001-1031 1299-1317 1409-1420 1423-1448 m742-800 802-818 834-865 870-907 910-951 954-985 990-1012 1018-1028 1043-1087 1090-1155 1159-1177 1181-1223 1233-1257 1260-1270 1278-1289 1299-1317 1320-1333 1351-1377 1403-1419 S a0-287 b0-293 541-567 c0-277 d1023 1028 1036 f540 938 1023 1036 1133 1138 h571 935 i542 j288 930 1133 k293-301 515-533 538-562 617-638 645-653 670-677 761-773 780-788 849-859 932-942 1135-1147 l301-314 512-533 538-580 617-640 643-655 663-679 760-771 779-802 848-860 930-946 1134-1150 m303-338 342-350 358-368 373-382 397-408 410-418 444-452 463-470 473-483 486-497 499-520 617-637 664-674 763-773 779-787 850-860 909-919 922-942 954-964 980-998 1003-1011 1022-1032 1066-1075 1079-1092 1117-1129 g1139-1437'],
['Sun Apr 10', 'P g629-1000 N g0-21 a240-980 1139-1484 b204-977 1129-1474 c246-977 1142-1474 d26 76 82 90 95-99 123-146 152-162 206 997 1056-1064 1120 1125 1487-1495 e99-133 f22 32 38 51 81 150 160 194 208 990-996 999 1057 1064 1117 1131 1488 1493 j210 240 979 1140 1485 k39-60 162-172 196-217 235-246 982-1017 1053-1063 1116-1123 1131-1146 1488-1496 l39-60 165-175 193-224 233-251 980-1019 1051-1066 1113-1125 1129-1147 1487-1500 m1064-1077 1108-1124 1495-1503 1521-1529 1537-1544 1563-1568 S a253-724 b238-734 c264-277 293-719 d210 738 1004-1014 1018 f29-34 210 215 231 729-734 822 950 1003 1021 1164 1169 i242 248 283 724 j946 k26-38 217-230 233-240 728-758 942-955 1159-1170 l26-39 217-253 728-753 941-959 1158-1172 m0-3 26-40 47-55 60-68 71-78 86-115 118-125 191-201 206-217 727-753 771-797 810-831 834-844 875-886 894-901 909-928 936-1011 1019-1037 1043-1051 1069-1082 1092-1137 1142-1152 1157-1172 g1171-1437'],
['Sat Apr  9', 'P g629-1000 N g0-81 84-314 a426-478 b314-342 426-481 549-578 923-949 c439-465 549-562 d83 355-362 484 491-499 920 925-930 939 1204 1208 1237 f320 359 366-374 414-418 424 498 918 928 938-943 1203 1237 h328 i328 426 479 j552 935 k322-363 373-392 414-434 481-489 499-510 550-601 643-667 876-896 920-946 1080-1119 1210-1221 1233-1244 1422-1435 1495-1514 l320-345 355-366 371-397 413-435 478-491 499-512 549-598 640-669 875-895 917-949 1079-1092 1111-1121 1209-1221 1233-1246 1422-1437 1492-1516 m656-669 677-698 703-742 784-800 820-841 849-859 862-870 875-896 902-920 923-951 957-985 988-1006 1012-1035 1053-1063 1074-1090 1113-1121 1129-1147 1152-1170 1175-1184 1187-1197 1202-1210 1213-1223 1232-1283 1286-1307 1312-1335 1338-1347 1354-1362 1375-1382 1388-1406 1422-1434 1456-1466 1477-1487 1492-1516 1542-1568 S d988-998 1138 f536-544 987 1003 1136 h1120 k280-290 306-319 531-559 652-679 680-689 719-731 753-763 828-836 912-922 925-938 986-996 1001-1009 1104-1116 1121-1131 l280-290 306-319 536-564 651-690 717-734 745-768 800-810 825-839 909-941 985-998 1001-1011 1103-1129 m5-16 34-42 47-55 73-81 99-118 123-133 149-170 173-186 206-222 230-238 274-290 306-319 387-418 439-447 449-457 463-470 486-499 504-538 541-559 1121-1134 g1139-1437'],
['Fri Apr  8', 'P g629-1000 N g0-337 a368-423 1092-1568 b355-426 494-523 1087-1568 c368-410 1100-1568 d346 588-597 600 716-737 750-781 850 979 e734-760 f341 348-355 514 591 612 717 767 782 850 979 1084 h424 602 i369 424 1092 j504 511 518 525 k355-374 428-439 502-512 519-531 589-597 601-619 704-720 766-776 876-886 897-907 1044-1053 1087-1097 l353-379 426-444 498-536 588-597 601-622 703-714 766-779 875-888 896-909 1043-1055 1087-1103 m612-645 651-661 703-713 784-792 839-865 875-886 889-909 915-955 959-1040 1043-1067 1069-1090 S a0-39 b0-44 802-831 925-967 c0-29 d415 501 696 700-706 710 1099 1106 f85 415 501 696 710 1093-1098 1174 h720 1093 i38 806 864 j720 728 804 860 867 931 1093 k41-50 160-172 218-230 248-267 283-293 411-429 438-452 495-508 516-525 629-640 695-703 712-733 803-813 862-878 929-943 1091-1102 l39-52 159-172 217-232 253-264 281-294 409-419 436-455 494-528 538-549 627-643 711-737 802-818 860-881 930-946 1090-1103 m39-55 84-97 110-122 159-170 180-200 204-225 228-243 264-274 282-293 303-315 324-335 352-376 379-416 632-666 669-679 682-693 711-737 792-818 826-846 855-873 899-910 922-943 964-1035 1037-1047 1058-1070 1087-1103 1116-1124 1139-1149 1152-1181 g1176-1437'],
['Thu Apr  7', 'P g629-944 950-1000 d943 i948 k946-950 l946-950 N g0-324 a1017-1568 b426-439 465-536 962-1568 c465-481 1019-1555 d334 340 552 568-578 590 597 613 624 690-698 743 752-760 773 814 820-828 880 897-902 f341 445 449-457 553 568 612 620-625 691 697 745 811 878-886 908 978 988 999 1016 h346 992 1012 i348 991 1003 1012 1566 j436 443 472 480 511 537 543 972 982 k345-376 436-448 459-472 506-516 533-547 555-562 568-575 614-627 691-704 740-747 973-1010 1015-1024 l342-382 436-453 457-498 502-519 531-549 553-564 567-578 612-630 690-706 740-753 972-1027 m622-641 645-656 661-669 679-689 693-711 730-737 750-758 763-773 810-821 829-839 862-873 883-896 902-925 941-957 962-972 975-1024 S a8-31 b0-44 277-293 c16-29 d526 729-742 912-917 921 1054 f1 41 521 526 741 909 h537 542 929 i2 j7 32 287 293 299 723 k0-16 40-52 279-303 327-335 384-392 530-563 648-659 724-734 740-750 924-948 l0-16 37-55 277-290 298-311 327-337 384-395 528-564 609-622 645-664 719-740 922-943 m44-55 60-78 86-97 103-117 122-140 158-170 191-201 228-238 277-311 314-324 327-337 384-395 421-431 491-499 515-530 645-656 692-710 720-740 753-763 771-779 784-794 813-823 833-844 849-859 896-904 907-915 922-941 1019-1029 1054-1061 g1056-1437'],
['Wed Apr  6', 'B g162-235 250-729 735-1152 d730 734 1153 1402 b1163-1260 1280-1298 1366-1377 1462-1491 c1471-1482 f1164 924 1275 1399 1452 1457 1462 1468 1514 1520 i1171 j1278 1286 1370 1383 1451 1470 1484 k238-243 248-255 1165-1183 1266-1278 1285-1295 1302-1311 1327-1336 1369-1377 1393-1404 1415-1420 1448-1459 1468-1479 1483-1490 l238-245 248-255 1165-1185 1265-1282 1285-1296 1302-1316 1327-1338 1346-1353 1369-1377 1393-1404 1449-1459 1468-1479 1483-1493 m1395-1400 1406-1422 1424-1437 1440-1479 1486-1535 1537-1566 T a15-27 b4-34 136-155 740-751 c13-25 740-751 d513 727-734 1048 1267 1271 f5 10 58 64 513 728 1049 1263 1271 1320 1330 1335 h1265 i1332 j10 16 27 140 741 k10-21 27-34 140-148 157-163 188-201 258-268 398-405 512-528 568-576 639-645 735-756 759-780 795-806 824-839 889-897 1042-1069 1210-1220 1318-1327 1329-1340 l10-21 27-35 140-149 156-163 187-200 259-274 397-406 512-529 567-577 639-647 734-782 795-808 823-843 889-899 906-916 1030-1070 1209-1222 1318-1342 m0-27 29-113 120-130 134-144 155-170 192-206 220-228 239-247 256-271 279-285 287-292 304-347 356-371 396-407 421-428 441-459 491-501 508-516 522-539 554-574 641-690 694-732 1046-1052 1063-1073 1101-1107 1136-1142 1151-1175 1178-1184 1209-1225 1243-1250 1262-1277 1306-1321 g1321-1549'],
['Tue Apr  5', 'B a1101-1141 1282-1568 b162-288 1096-1136 1251-1260 1280-1568 c1107-1136 1280-1568 d297-303 660 1085 1217 1223-1229 1238-1254 1270 1274 e1229-1245 f1088 1091 1145 1149 1216 1228 1249 1263 1270 1275 h1093 i1101 1141 j1099 1258 1281 k1090-1105 1144-1150 1154-1160 1174-1191 1211-1229 1257-1282 l1090-1109 1143-1161 1174-1192 1211-1231 1256-1289 m1262-1267 g162-297 301-658 662-1079 T a0-354 b0-348 539-558 c0-348 d360 363-367 876 1184-1189 f358 737 871 1185 1340 h1183 j354 543 k357-363 367-392 405-411 437-448 542-548 551-556 728-742 878-884 979-992 996-1005 1038-1069 1179-1187 1338-1344 l358-365 367-375 384-394 405-415 437-449 541-558 727-744 878-885 973-992 995-1007 1013-1021 1036-1071 1177-1190 1336-1346 m442-448 456-468 490-495 539-547 568-574 621-629 650-658 675-681 706-713 715-723 726-734 750-761 771-788 803-808 811-817 822-830 870-876 1063-1084 1119-1124 1126-1134 1176-1187 1189-1195 1296-1304 1336-1343 g1344-1549'],
['Mon Apr  4', 'B a1262-1302 b1087-1096 1260-1309 1415-1444 c1271-1298 d424 428 1091 1308 g162-423 427-972 974-1087 1107-1247 f973 1108 1254 1258 1305 1310 1315 1337 1341 i1262 1302 j1092 1420 k1091-1097 1100-1112 1257-1267 1304-1321 1338-1349 1418-1447 1478-1486 l1092-1099 1105-1112 1256-1269 1302-1324 1336-1351 1418-1433 1437-1447 1477-1488 m1105-1112 1254-1262 1437-1448 1451-1475 1480-1568 T a428-685 b195-237 419-681 862-872 1438-1549 c428-681 d289-293 407-411 692-698 740-744 864-872 881 1243-1249 f290 294 299 305 403 414 418 693 700-704 740-744 882 1250 1320 1441 h1183 j203 428 684 872 1440 k19-29 118-127 202-209 287-294 420-431 686-707 742-751 863-869 872-907 943-951 1021-1032 1177-1183 1186-1191 1241-1249 1319-1327 1440-1446 l19-31 117-128 201-211 287-296 419-435 690-702 742-753 862-912 943-958 1019-1034 1176-1193 1241-1251 1319-1327 1440-1449 m0-17 23-134 140-151 168-176 199-216 229-237 287-302 306-314 344-359 394-400 402-407 419-428 690-698 702-715 723-730 736-753 765-780 786-793 799-807 818-826 845-868 1027-1034 1046-1052 1071-1077 1084-1090 1093-1103 1111-1119 1143-1172 1174-1187 1205-1212 1239-1246 1251-1258 1310-1325 g1321-1440 1442-1549'],
['Sun Apr  3', 'B a1025-1515 b1019-1510 c1030-1510 d274 912 915-924 935 941 946-951 953-957 1525 e924-943 f920 944 950 956 978 984 1009 1525 1529 1532 g162-270 273-912 j983 1023 1516 k955-991 1010-1016 1018-1027 1518-1531 1534-1552 l955-963 977-995 1008-1030 1519-1531 1533-1550 m1524-1530 T a0-59 176-417 692-1054 b0-54 166-419 681-1044 c0-54 176-407 711-1044 d71 424 1251 1255 f70 74 77 419-425 641 1059-1065 1250 1257 1340-1344 h678 i684 689 707 1053 j60 175 417 k60-75 78-98 119-129 172-182 419-429 493-502 577-590 601-606 633-645 677-694 1055-1070 1176-1187 l64-76 78-96 118-130 172-182 419-432 493-503 576-582 587-608 627-645 677-698 1054-1071 1176-1189 m69-75 122-134 136-142 172-178 425-442 465-470 473-480 491-501 512-520 537-549 556-568 576-581 641-650 664-673 675-684 1056-1062 1065-1075 1096-1105 1107-1113 1117-1147 1159-1197 1201-1222 1226-1250 1256-1264 1270-1277 1279-1289 1302-1314 1316-1321 1327-1348 g1344-1549'],
['Sat Apr  2', 'B a1440-1475 b173-191 1336-1386 1433-1471 c1444-1471 d165 170 174 700 1210 1413 1560 f163 169 175 291 1325 1330 1336 1401 1412 h1213 1341 i1212 1340 1441 1475 j178 1397 1439 k162-170 184-190 289-295 1211-1219 1329-1352 1396-1419 1475-1489 1504-1511 1546-1559 l162-190 1211-1222 1331-1355 1395-1419 1435-1448 1475-1481 1484-1493 1504-1517 1547-1559 m184-191 224-242 264-267 288-295 1211-1217 1338-1344 1406-1415 1551-1568 g291-696 702-1205 1213-1320 T a0-17 312-386 b0-13 306-388 c0-13 306-327 d103-109 710 1000-1008 1198 1202 1303 f110 303 389 397 401 533 712 1001 1008-1013 1198 1204 1290 h804 i17 j311 330 374 387 998 k18-33 48-55 294-309 388-400 495-504 516-522 532-538 595-602 704-727 805-815 836-843 921-935 998-1006 1192-1203 1289-1296 l17-25 27-36 48-61 92-105 294-312 388-402 495-505 514-524 531-539 593-602 704-746 750-757 760-771 774-785 789-817 832-845 920-937 998-1007 1193-1204 1289-1296 m98-121 124-151 157-163 166-174 184-191 197-205 214-226 252-262 275-281 293-300 400-413 442-451 482-501 635-641 644-662 702-719 929-937 941-948 969-983 997-1007 1012-1019 1023-1048 1056-1086 1090-1101 1109-1115 1132-1142 1145-1157 1159-1197 1203-1209 1231-1237 1247-1254 1277-1295 g1291-1302 1304-1549'],
['Fri Apr  1', 'B a1176-1209 b1174-1203 c1183-1203 d480 1149 1385 1396 1409-1415 1418-1424 e1397-1417 f1159 1338 1386 1417 1423 i1176 1209 j1253 k1163-1176 1211-1220 1258-1264 1274-1304 1333-1342 1479-1502 l1163-1183 1209-1222 1253-1265 1274-1287 1295-1307 1333-1343 1479-1486 1491-1504 m1161-1169 1338-1355 1357-1364 1369-1384 1424-1442 1453-1517 1519-1528 1530-1543 1546-1568 g162-476 481-1147 T a155-581 631-642 644-1543 b155-579 629-1549 c166-579 629-641 650-1539 d621 625 f132 154 619 625 h152 629 643 1544 i152 580 617 622 629 644 1544 k21-46 132-140 151-161 583-592 597-604 620-634 1547-1549 l21-29 34-47 131-142 151-162 581-593 597-604 616-639 644-652 m2-61 64-73 75-103 105-117 122-147 151-159 585-602']
];

const top0 = 224.3, pitch = 40.31, left = 629.5, quarter = 380;
const parts = [];
const line = (cls, x1, y1, x2, y2) => parts.push(`<line class="${cls}" x1="${x1}" y1="${y1}" x2="${x2}" y2="${y2}"/>`);

days.forEach((day, i) => {
  parts.push(`<text class="day" x="${left}" y="${Math.round(top0 + pitch * (i + 1)) - 2}">${day[0]}</text>`);
});
for (let i = 0; i <= days.length; i++) {
  const y = Math.round(top0 + pitch * i) + 0.5;
  line('rule', 553, y, 2226, y);
}
for (let i = 0; i <= 8; i++) {
  const x = left + quarter / 2 * i;
  line(i % 2 ? 'minor' : 'major', x, 167, x, 1494);
}
['00:00', '06:00', '12:00', '18:00', '00:00'].forEach((t, i) => {
  parts.push(`<text class="hour" x="${left + quarter * i}" y="1518">${t}</text>`);
});

days.forEach((day, i) => {
  const y = Math.round(top0 + pitch * i + 2.3);
  let base, lane;
  for (let token of day[1].split(' ')) {
    if (bases[token]) { base = bases[token]; continue; }
    if (token[0] >= 'a') { lane = token.charCodeAt(0) - 97; token = token.slice(1); }
    const [from, to] = token.split('-').map(n => base[0] + base[1] * n);
    const cls = sensors[lane], ly = y + lane * 3;
    if (lane === 8 || lane === 9) {
      parts.push(`<circle class="${cls}" cx="${from.toFixed(1)}" cy="${ly + 1}" r="2.8"/>`);
    } else if (to === undefined) {
      parts.push(`<rect class="${cls}" x="${(from - 0.7).toFixed(1)}" y="${ly}" width="1.4" height="3"/>`);
    } else {
      parts.push(`<rect class="${cls}" x="${from.toFixed(1)}" y="${ly}" width="${(to - from).toFixed(1)}" height="3"/>`);
    }
  }
});
document.getElementById('plot').innerHTML = parts.join('');
```
